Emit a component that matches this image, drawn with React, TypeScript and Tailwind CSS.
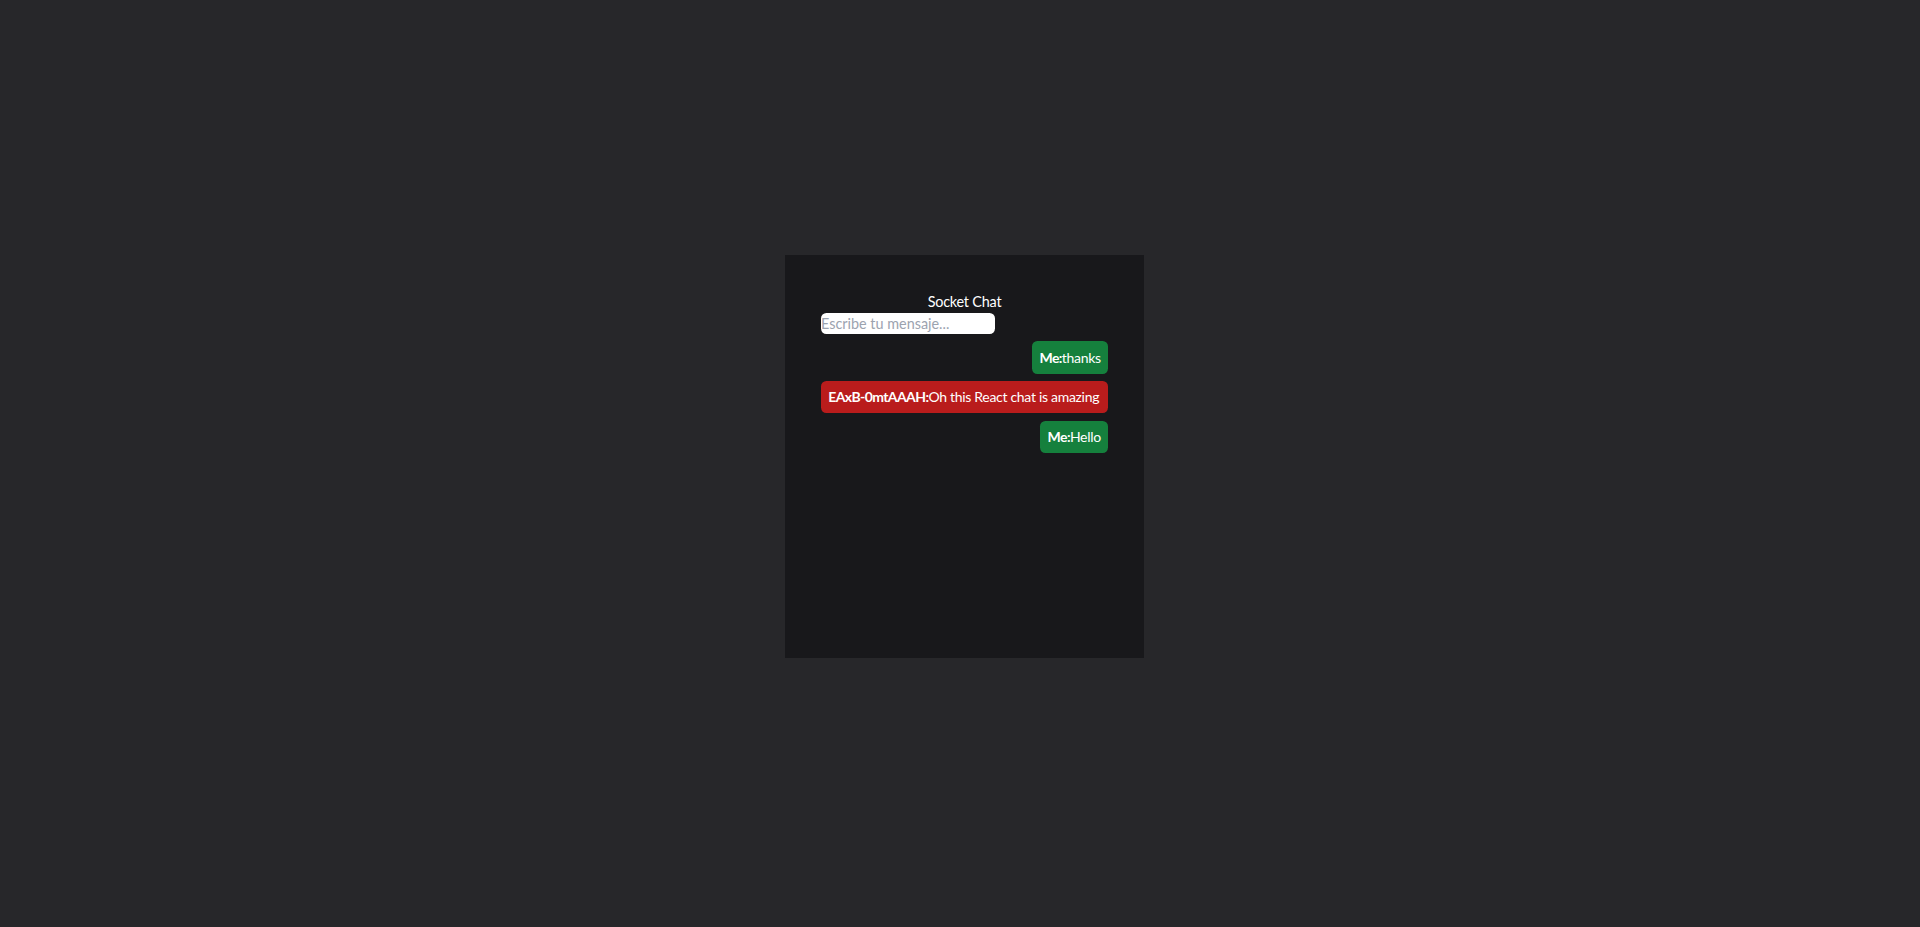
import React from "react";

const font = { fontFamily: "Lato, 'Open Sans', sans-serif" };

export default function App() {
  return (
    <div
      className="flex h-screen w-full items-center justify-center bg-[#27272a] pl-[9px] pb-[14px] text-[14.4px] leading-[21.6px] text-white"
      style={font}
    >
      <div className="flex h-[403px] w-[359px] flex-col bg-[#18181b] px-[36px] pt-[36px]">
        <h1 className="text-center text-[14.4px] leading-[21.6px] font-normal tracking-[-0.2px]">Socket Chat</h1>
        <input
          type="text"
          placeholder="Escribe tu mensaje..."
          className="h-[21.6px] w-[174px] rounded-[5.4px] bg-white p-0 text-[14.4px] leading-[21.6px] text-black placeholder:text-[#9ca3af] outline-none"
          style={font}
        />
        <ul className="mt-[7.2px] flex flex-col gap-[7.2px]">
          <li className="ml-auto w-fit whitespace-nowrap rounded-[5.4px] bg-[#15803d] p-[7.2px] text-[14px] leading-[18px] tracking-[-0.3px]">
            <b className="font-bold tracking-[-0.6px]">Me:</b>thanks
          </li>
          <li className="w-full whitespace-nowrap rounded-[5.4px] bg-[#b91c1c] p-[7.2px] text-[14px] leading-[18px] tracking-[-0.3px]">
            <b className="font-bold tracking-[-0.6px]">EAxB-0mtAAAH:</b>Oh this React chat is amazing
          </li>
          <li className="ml-auto w-fit whitespace-nowrap rounded-[5.4px] bg-[#15803d] p-[7.2px] text-[14px] leading-[18px] tracking-[-0.3px]">
            <b className="font-bold tracking-[-0.6px]">Me:</b>Hello
          </li>
        </ul>
      </div>
    </div>
  );
}
